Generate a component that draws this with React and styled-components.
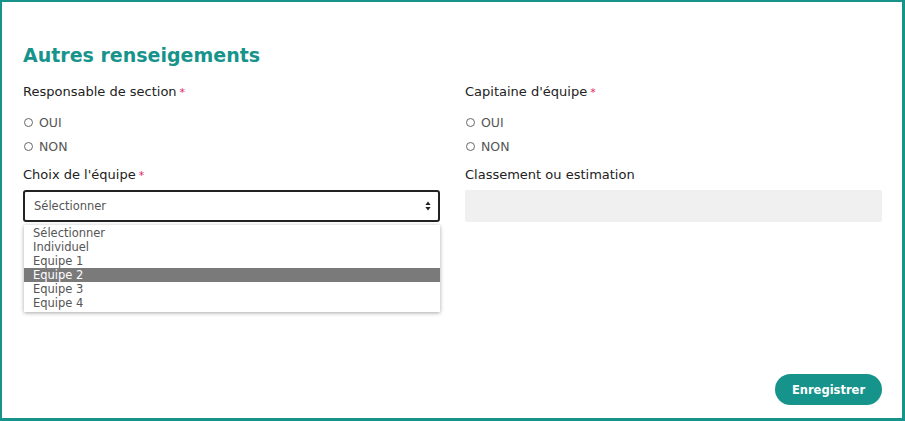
import React, { useState } from 'react';
import styled, { createGlobalStyle } from 'styled-components';

const teal = '#16948c';

const GlobalStyle = createGlobalStyle`
  html, body {
    margin: 0;
    padding: 0;
    background: #fff;
  }
  body {
    font-family: "DejaVu Sans", "Open Sans", sans-serif;
  }
`;

const Frame = styled.div`
  box-sizing: border-box;
  width: 905px;
  height: 421px;
  border: 2px solid ${teal};
  border-right-width: 3px;
  border-bottom-width: 3px;
  padding: 42px 20px 0 21px;
  display: flex;
  flex-direction: column;
`;

const Title = styled.h2`
  margin: 0 0 17px;
  font-size: 19px;
  font-weight: 700;
  color: ${teal};
  letter-spacing: 0;
`;

const Grid = styled.div`
  display: grid;
  grid-template-columns: 417px 417px;
  column-gap: 25px;
`;

const Column = styled.div`
  display: flex;
  flex-direction: column;
`;

const Label = styled.div`
  font-size: 13px;
  color: #222;
  height: 18px;
  line-height: 18px;
  margin-top: ${p => p.$top || 0}px;
  margin-bottom: ${p => p.$gap || 0}px;
`;

const Star = styled.span`
  color: #e0245e;
  margin-left: 3px;
  font-size: 11px;
`;

const RadioRow = styled.label`
  display: flex;
  align-items: center;
  height: 24px;
  font-size: 12.5px;
  color: #555;
  gap: 6px;
`;

const Circle = styled.span`
  box-sizing: border-box;
  width: 9px;
  height: 9px;
  border: 1px solid #666;
  border-radius: 50%;
  margin-left: 1px;
`;

const SelectWrap = styled.div`
  position: relative;
`;

const SelectBox = styled.div`
  box-sizing: border-box;
  height: 32px;
  border: 2px solid #222;
  border-radius: 3px;
  display: flex;
  align-items: center;
  justify-content: space-between;
  padding: 0 7px 0 9px;
  font-size: 11.5px;
  color: #555;
`;

const Menu = styled.ul`
  position: absolute;
  top: 35px;
  left: 1px;
  right: 0;
  margin: 0;
  padding: 1px 0 2px;
  list-style: none;
  background: #fff;
  box-shadow: 0 1px 4px rgba(0, 0, 0, 0.35);
`;

const Option = styled.li`
  height: 14px;
  line-height: 14px;
  padding-left: 9px;
  font-size: 11.5px;
  color: ${p => (p.$active ? '#fff' : '#555')};
  background: ${p => (p.$active ? '#7a7a7a' : 'transparent')};
`;

const TextInput = styled.div`
  height: 32px;
  background: #f0f0f0;
  border-radius: 2px;
`;

const Footer = styled.div`
  margin-top: auto;
  display: flex;
  justify-content: flex-end;
  padding-bottom: 13px;
`;

const Button = styled.button`
  width: 107px;
  height: 31px;
  border: none;
  border-radius: 16px;
  background: ${teal};
  color: #fff;
  font-family: inherit;
  font-weight: 700;
  font-size: 11.5px;
  cursor: pointer;
`;

const Arrows = () => (
  <svg width="6" height="10" viewBox="0 0 6 10">
    <path d="M3 0.5 L5.6 4 H0.4 Z" fill="#222" />
    <path d="M3 9.5 L5.6 6 H0.4 Z" fill="#222" />
  </svg>
);

const Radio = ({ label }) => (
  <RadioRow>
    <Circle />
    {label}
  </RadioRow>
);

const options = ['Sélectionner', 'Individuel', 'Equipe 1', 'Equipe 2', 'Equipe 3', 'Equipe 4'];

export default function App() {
  const [hover] = useState('Equipe 2');
  return (
    <>
      <GlobalStyle />
      <Frame>
        <Title>Autres renseigements</Title>
        <Grid>
          <Column>
            <Label $gap={9}>
              Responsable de section<Star>*</Star>
            </Label>
            <Radio label="OUI" />
            <Radio label="NON" />
            <Label $top={8} $gap={6}>
              Choix de l'équipe<Star>*</Star>
            </Label>
            <SelectWrap>
              <SelectBox>
                Sélectionner
                <Arrows />
              </SelectBox>
              <Menu>
                {options.map(o => (
                  <Option key={o} $active={o === hover}>{o}</Option>
                ))}
              </Menu>
            </SelectWrap>
          </Column>
          <Column>
            <Label $gap={9}>
              Capitaine d'équipe<Star>*</Star>
            </Label>
            <Radio label="OUI" />
            <Radio label="NON" />
            <Label $top={8} $gap={6}>
              Classement ou estimation
            </Label>
            <TextInput />
          </Column>
        </Grid>
        <Footer>
          <Button>Enregistrer</Button>
        </Footer>
      </Frame>
    </>
  );
}
